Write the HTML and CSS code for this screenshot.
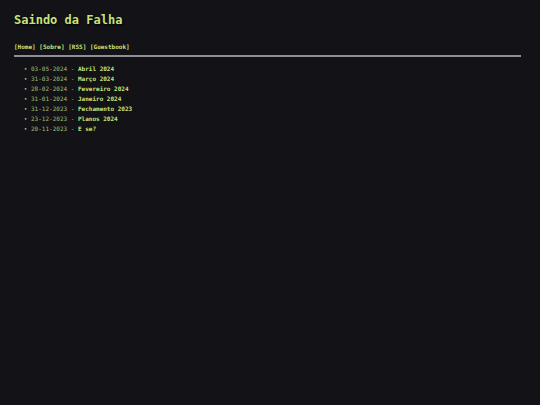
FILE: index.html
```html
<!DOCTYPE html>
<html lang="pt-BR">

<head>
    <meta charset="UTF-8">
    <meta name="viewport" content="width=device-width, initial-scale=1.0">
    <title>Saindo da Falha</title>
    <link rel="stylesheet" href="styles.css">
</head>

<body>
    <header>
        <h1>Saindo da Falha</h1>
        <nav class="menu">
            <a href="index.html">[Home]</a>
            <a href="sobre.html">[Sobre]</a>
            <a href="rss.xml">[RSS]</a>
            <a href="guestbook.html">[Guestbook]</a>
        </nav>
    </header>
    <hr>
    <main>
        <ul class="posts">
            <li>03-05-2024 - <a href="abril-2024.html">Abril 2024</a></li>
            <li>31-03-2024 - <a href="marco-2024.html">Março 2024</a></li>
            <li>28-02-2024 - <a href="fevereiro-2024.html">Fevereiro 2024</a></li>
            <li>31-01-2024 - <a href="janeiro-2024.html">Janeiro 2024</a></li>
            <li>31-12-2023 - <a href="fechamento-2023.html">Fechamento 2023</a></li>
            <li>23-12-2023 - <a href="planos-2024.html">Planos 2024</a></li>
            <li>20-11-2023 - <a href="e-se.html">E se?</a></li>
        </ul>
    </main>
</body>

</html>
```

FILE: styles.css
```css
body {
    margin: 0;
    padding: 10px 19px 10px 14px;
    background-color: #121217;
    color: #a9bd72;
    font-family: "DejaVu Sans Mono", monospace;
    font-size: 6px;
    line-height: 10px;
}

h1 {
    margin: 0 0 12px;
    color: #c8e37b;
    font-size: 12px;
    font-weight: bold;
    line-height: 20px;
    text-shadow: 1px 1px 2px #000;
}

a {
    color: #c8e37b;
    font-weight: bold;
    text-decoration: none;
}

a:hover {
    text-decoration: underline;
}

hr {
    height: 2px;
    margin: 3px 0 7px;
    border: none;
    background-color: #8f8e93;
}

.posts {
    margin: 0;
    padding-left: 17px;
    list-style-type: "• ";
}
```
